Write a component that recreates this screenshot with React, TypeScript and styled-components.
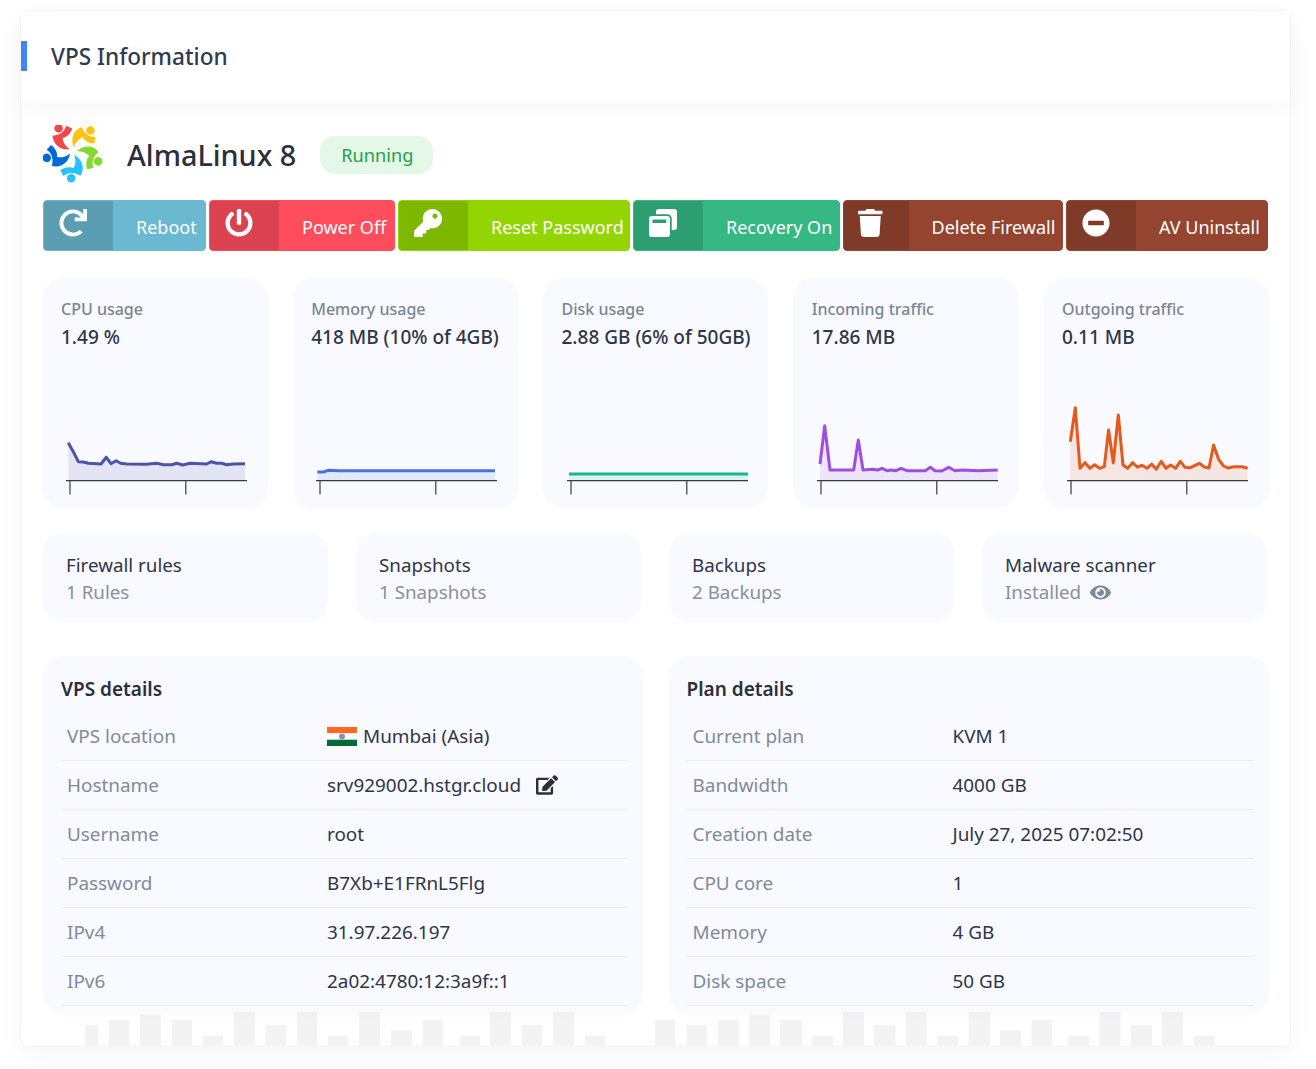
import React from 'react';
import styled, { createGlobalStyle } from 'styled-components';
import { FaRedo, FaPowerOff, FaKey, FaWindowRestore, FaTrash, FaMinusCircle, FaEdit, FaEye } from 'react-icons/fa';

const Global = createGlobalStyle`
  html, body { margin: 0; padding: 0; background: #fff; }
  body { font-family: "Noto Sans", "Open Sans", sans-serif; color: #2b2f3c; }
`;

const Page = styled.div`
  padding: 11px 26px 23px 21px;
`;
const Card = styled.div`
  position: relative;
  background: #fff;
  border-radius: 6px;
  box-shadow: 0 0 0 1px #f5f5f5, 0 10px 30px rgba(0, 0, 0, 0.035);
  height: 1035px;
`;
const Header = styled.div`
  position: relative;
  height: 92px;
  display: flex;
  align-items: center;
  background: #fff;
  box-shadow: 0 8px 20px rgba(0, 0, 0, 0.03);
`;
const Accent = styled.div`
  width: 6px;
  height: 30px;
  margin-right: 24px;
  margin-top: -2px;
  background: #4285f4;
`;
const Title = styled.h1`
  margin: 0;
  font-size: 22.6px;
  line-height: 30px;
  font-weight: 500;
  color: #2f3b4c;
`;
const Body = styled.div`
  position: relative;
  z-index: 1;
  padding: 22px 22px 0 22px;
`;
const OsRow = styled.div`
  display: flex;
  align-items: center;
  height: 58px;
`;
const OsName = styled.div`
  margin: 2px 0 0 24px;
  font-size: 28.8px;
  line-height: 36px;
  font-weight: 500;
  color: #2b2f3c;
`;
const Badge = styled.div`
  margin-left: 24px;
  margin-top: 2px;
  height: 38px;
  padding: 0 20px 0 21px;
  display: flex;
  align-items: center;
  border-radius: 15px;
  background: #e3f8e6;
  color: #23a04c;
  font-size: 18.2px;
`;
const Actions = styled.div`
  margin-top: 17px;
  display: flex;
  gap: 3px;
`;
const ActionButton = styled.div<{ $bg: string; $w: number }>`
  box-sizing: border-box;
  width: ${(p) => p.$w}px;
  height: 51px;
  border: 1px solid ${(p) => p.$bg};
  border-radius: 4px;
  background: ${(p) => p.$bg};
  color: #fff;
  display: flex;
  align-items: stretch;
  overflow: hidden;
  font-size: 18px;
`;
const ActionIcon = styled.div<{ $narrow?: boolean }>`
  padding: 8px 26px 0 ${(p) => (p.$narrow ? 14 : 15)}px;
  background: rgba(0, 0, 0, 0.14);
  line-height: 0;
  svg {
    display: block;
    width: ${(p) => (p.$narrow ? 24.5 : 28)}px;
    height: 28px;
  }
`;
const ActionLabel = styled.div`
  flex: 1;
  display: flex;
  align-items: center;
  padding: 2px 0 0 23px;
  white-space: nowrap;
`;
const Stats = styled.div`
  margin-top: 27px;
  display: grid;
  grid-template-columns: repeat(5, 225px);
  gap: 25.25px;
  margin-left: -0.5px;
`;
const StatCard = styled.div`
  box-sizing: border-box;
  height: 230px;
  padding: 18px 0 13px 18.5px;
  display: flex;
  flex-direction: column;
  border-radius: 20px;
  background: #f9faff;
  box-shadow: 0 2px 8px rgba(0, 0, 0, 0.012);
`;
const StatLabel = styled.div`
  font-size: 16px;
  line-height: 26px;
  font-weight: 500;
  color: #7a8594;
`;
const StatValue = styled.div`
  margin-top: 2px;
  font-size: 19px;
  line-height: 26px;
  font-weight: 500;
  color: #2f3548;
  white-space: nowrap;
`;
const Chart = styled.svg`
  display: block;
  margin: auto 0 0 2px;
  width: 190px;
  height: 100px;
  overflow: visible;
`;
const Services = styled.div`
  margin-top: 25px;
  display: grid;
  grid-template-columns: repeat(4, 285px);
  gap: 28px;
`;
const ServiceCard = styled.div`
  box-sizing: border-box;
  height: 89px;
  padding: 19px 23px 0;
  border-radius: 20px;
  background: #f9faff;
  font-size: 18.8px;
  line-height: 27px;
`;
const ServiceName = styled.div`
  color: #2f3548;
`;
const ServiceSub = styled.div`
  display: flex;
  align-items: center;
  gap: 9px;
  color: #87909e;
  svg { font-size: 21px; color: #7d8a99; }
`;
const Panels = styled.div`
  margin-top: 34px;
  display: grid;
  grid-template-columns: 600px 600px;
  gap: 25.5px;
`;
const Panel = styled.div`
  box-sizing: border-box;
  height: 356px;
  padding: 20px 15px 0 18px;
  border-radius: 20px;
  background: #f8faff;
  box-shadow: 0 3px 8px rgba(0, 0, 0, 0.018);
`;
const PanelTitle = styled.div`
  font-size: 19px;
  line-height: 26px;
  font-weight: 600;
  color: #2b2f3c;
  margin-bottom: 10px;
`;
const Row = styled.div`
  box-sizing: border-box;
  height: 49px;
  padding-left: 6px;
  display: grid;
  grid-template-columns: 260px 1fr;
  align-items: center;
  border-bottom: 1px solid #ebeef2;
  font-size: 18.9px;
`;
const RowLabel = styled.div`
  color: #7f8b9b;
`;
const RowValue = styled.div`
  display: flex;
  align-items: center;
  color: #2f3548;
  white-space: nowrap;
`;
const Flag = styled.svg`
  width: 30px;
  height: 19px;
  margin-right: 6px;
  flex: none;
`;
const EditBtn = styled.span`
  margin-left: 15px;
  font-size: 22px;
  line-height: 0;
  color: #2b2f3c;
`;
const Bars = styled.svg`
  position: absolute;
  left: 0;
  bottom: 0;
  width: 1269px;
  height: 44px;
`;
const LogoMark = styled.svg`
  width: 60px;
  height: 58px;
  flex: none;
`;

const Logo = () => {
  const people = [
    { r: 0, c: '#ffc20e' },
    { r: 72, c: '#86da2f' },
    { r: 144, c: '#24c2ff' },
    { r: 216, c: '#0069da' },
    { r: 288, c: '#f2484b' },
  ];
  return (
    <LogoMark viewBox="39 31 176 170">
      {people.map((p) => (
        <g key={p.r} transform={`rotate(${p.r} 127 108)`} fill={p.c}>
          <circle cx="178" cy="47" r="12.5" />
          <path d="M130 98C118 72 128 46 152 37C156 46 159 52 167 58C173 64 182 66 192 66L190 85C175 85 160 78 155 67C145 71 134 82 130 98Z" />
        </g>
      ))}
    </LogoMark>
  );
};

type Pt = [number, number];
const AXIS_Y = 85.7;
const toPts = (pts: Pt[], ox: number): Pt[] => pts.map(([x, y]) => [x / 3 + ox, y / 3 - 5] as Pt);

const LineChart = ({ pts, ox, color, width = 3 }: { pts: Pt[]; ox: number; color: string; width?: number }) => {
  const p = toPts(pts, ox);
  const line = p.map(([x, y]) => `${x.toFixed(1)},${y.toFixed(1)}`).join(' ');
  const first = p[0][0].toFixed(1);
  const last = p[p.length - 1][0].toFixed(1);
  return (
    <Chart viewBox="0 0 190 100">
      <polygon points={`${first},${AXIS_Y} ${line} ${last},${AXIS_Y}`} fill={color} fillOpacity="0.12" />
      <polyline points={line} fill="none" stroke={color} strokeWidth={width} strokeLinejoin="round" />
      <path d="M3 85.7H184M7 85.7V99.5M122.8 85.7V99.5" fill="none" stroke="#3b3b3b" strokeWidth="1.2" />
    </Chart>
  );
};

const cpu: Pt[] = [[115,158],[130,185],[145,215],[160,216],[175,220],[213,222],[229,202],[243,221],[258,212],[272,220],[290,222],[350,223],[380,220],[400,224],[425,224],[440,220],[458,225],[480,220],[530,222],[543,215],[560,220],[575,220],[590,224],[610,222],[645,221]];
const mem: Pt[] = [[862,246],[880,246],[895,241],[925,242],[1395,242]];
const disk: Pt[] = [[114,252],[651,252]];
const incoming: Pt[] = [[117,222],[131,107],[147,240],[218,240],[232,150],[246,240],[275,238],[290,240],[303,235],[318,242],[330,240],[345,242],[360,235],[378,242],[433,242],[448,232],[462,242],[482,243],[503,232],[522,242],[545,240],[590,242],[650,240]];
const outgoing: Pt[] = [[870,155],[885,53],[899,235],[914,218],[929,235],[943,224],[958,235],[972,230],[985,120],[999,218],[1014,75],[1028,225],[1042,235],[1057,218],[1071,231],[1085,226],[1100,235],[1114,222],[1128,238],[1143,214],[1157,235],[1171,225],[1186,235],[1200,214],[1214,232],[1230,233],[1257,220],[1272,231],[1286,234],[1300,165],[1315,208],[1330,228],[1343,234],[1360,230],[1385,230],[1402,235]];

const actions = [
  { label: 'Reboot', icon: <FaRedo />, bg: '#6ab9d1', w: 163 },
  { label: 'Power Off', icon: <FaPowerOff />, bg: '#ff4d5e', w: 186 },
  { label: 'Reset Password', icon: <FaKey />, bg: '#93d500', w: 232 },
  { label: 'Recovery On', icon: <FaWindowRestore />, bg: '#35b884', w: 207 },
  { label: 'Delete Firewall', icon: <FaTrash />, bg: '#94442f', w: 220, narrow: true },
  { label: 'AV Uninstall', icon: <FaMinusCircle />, bg: '#94442f', w: 202 },
];

const vps = [
  ['Hostname', 'srv929002.hstgr.cloud'],
  ['Username', 'root'],
  ['Password', 'B7Xb+E1FRnL5Flg'],
  ['IPv4', '31.97.226.197'],
  ['IPv6', '2a02:4780:12:3a9f::1'],
];
const plan = [
  ['Current plan', 'KVM 1'],
  ['Bandwidth', '4000 GB'],
  ['Creation date', 'July 27, 2025 07:02:50'],
  ['CPU core', '1'],
  ['Memory', '4 GB'],
  ['Disk space', '50 GB'],
];

const bars: [number, number, number][] = [
  [85,13,21],[108.5,21,26.5],[140,21,31.5],[172,20,26.5],[203,20,10.5],[234,21,38],[265.5,20.5,21],[297,20,44],[328,20,10.5],[359,21,38],[391,21,15.6],[422.5,20.5,26.5],[460,20,10.5],[490,21,38],[522,20,21],[553,21,44],[585,20,10.5],
  [655,20.5,26.5],[686.5,20.5,21],[718,21,26.5],[749,21,31.5],[780,22,26.5],[812,21,10.5],[843,21,38],[874,21.5,21],[906,20.5,44],[937.5,20.5,10.5],[968.5,21.5,38],[1000,21,15.6],[1031.5,20.5,26.5],[1068,21,10.5],[1099.5,21,38],[1131,21,21],[1162,21,44],[1194,20.5,10.5],
];

export default function App() {
  return (
    <Page>
      <Global />
      <Card>
        <Bars viewBox="0 0 1269 44">
          {bars.map(([x, w, h]) => (
            <rect key={x} x={x - 21} y={44 - h} width={w} height={h} fill="#f3f3f3" />
          ))}
        </Bars>
        <Header>
          <Accent />
          <Title>VPS Information</Title>
        </Header>
        <Body>
          <OsRow>
            <Logo />
            <OsName>AlmaLinux 8</OsName>
            <Badge>Running</Badge>
          </OsRow>
          <Actions>
            {actions.map((a) => (
              <ActionButton key={a.label} $bg={a.bg} $w={a.w}>
                <ActionIcon $narrow={a.narrow}>{a.icon}</ActionIcon>
                <ActionLabel>{a.label}</ActionLabel>
              </ActionButton>
            ))}
          </Actions>
          <Stats>
            <StatCard>
              <StatLabel>CPU usage</StatLabel>
              <StatValue>1.49 %</StatValue>
              <LineChart pts={cpu} ox={-33} color="#4a55a8" />
            </StatCard>
            <StatCard>
              <StatLabel>Memory usage</StatLabel>
              <StatValue>418 MB (10% of 4GB)</StatValue>
              <LineChart pts={mem} ox={-283} color="#4274dc" />
            </StatCard>
            <StatCard>
              <StatLabel>Disk usage</StatLabel>
              <StatValue>2.88 GB (6% of 50GB)</StatValue>
              <LineChart pts={disk} ox={-33} color="#17b890" />
            </StatCard>
            <StatCard>
              <StatLabel>Incoming traffic</StatLabel>
              <StatValue>17.86 MB</StatValue>
              <LineChart pts={incoming} ox={-33} color="#9f4fe0" />
            </StatCard>
            <StatCard>
              <StatLabel>Outgoing traffic</StatLabel>
              <StatValue>0.11 MB</StatValue>
              <LineChart pts={outgoing} ox={-283.7} color="#e4591c" />
            </StatCard>
          </Stats>
          <Services>
            <ServiceCard>
              <ServiceName>Firewall rules</ServiceName>
              <ServiceSub>1 Rules</ServiceSub>
            </ServiceCard>
            <ServiceCard>
              <ServiceName>Snapshots</ServiceName>
              <ServiceSub>1 Snapshots</ServiceSub>
            </ServiceCard>
            <ServiceCard>
              <ServiceName>Backups</ServiceName>
              <ServiceSub>2 Backups</ServiceSub>
            </ServiceCard>
            <ServiceCard>
              <ServiceName>Malware scanner</ServiceName>
              <ServiceSub>Installed <FaEye /></ServiceSub>
            </ServiceCard>
          </Services>
          <Panels>
            <Panel>
              <PanelTitle>VPS details</PanelTitle>
              <Row>
                <RowLabel>VPS location</RowLabel>
                <RowValue>
                  <Flag viewBox="0 0 30 19">
                    <rect width="30" height="6.3" fill="#ff6820" />
                    <rect y="6.3" width="30" height="6.4" fill="#fff" />
                    <rect y="12.7" width="30" height="6.3" fill="#046a38" />
                    <circle cx="15" cy="9.5" r="3" fill="#8c8fc4" />
                  </Flag>
                  Mumbai (Asia)
                </RowValue>
              </Row>
              {vps.map(([k, v]) => (
                <Row key={k}>
                  <RowLabel>{k}</RowLabel>
                  <RowValue>
                    {v}
                    {k === 'Hostname' && (
                      <EditBtn>
                        <FaEdit />
                      </EditBtn>
                    )}
                  </RowValue>
                </Row>
              ))}
            </Panel>
            <Panel>
              <PanelTitle>Plan details</PanelTitle>
              {plan.map(([k, v]) => (
                <Row key={k}>
                  <RowLabel>{k}</RowLabel>
                  <RowValue>{v}</RowValue>
                </Row>
              ))}
            </Panel>
          </Panels>
        </Body>
      </Card>
    </Page>
  );
}
